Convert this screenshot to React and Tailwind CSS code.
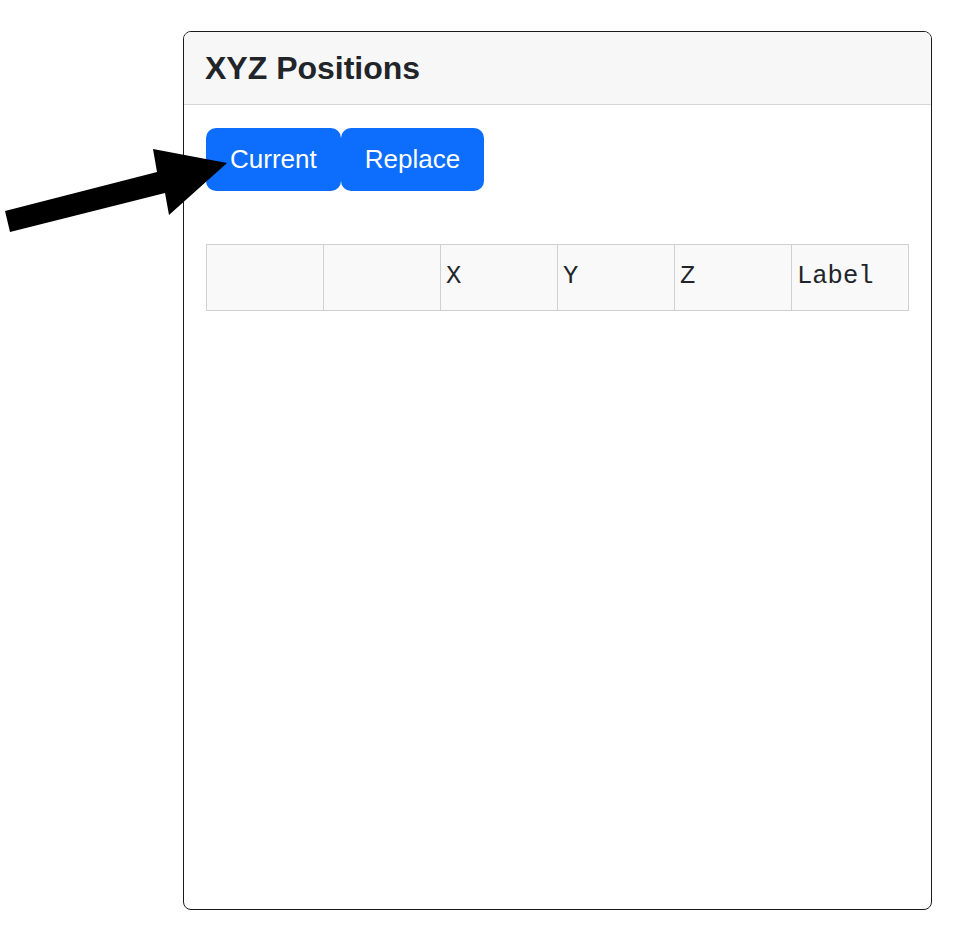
export default function App() {
    const cols = ["", "", "X", "Y", "Z", "Label"];

    return (
        <div className="relative min-h-[939px] bg-white pl-[183px] pt-[31px] font-['Liberation_Sans',Arial,sans-serif]">
            <div className="flex h-[879px] w-[749px] flex-col overflow-hidden rounded-[8px] border-[1.5px] border-[#1a1a1a]">
                <div className="flex h-[73px] items-center border-b border-[#d6d6d6] bg-[#f7f7f7] px-[21px]">
                    <h2 className="text-[32px] font-bold text-[#212529]">XYZ Positions</h2>
                </div>
                <div className="flex flex-col pl-[22px] pt-[23px]">
                    <div className="flex">
                        <button className="h-[63px] rounded-[10px] bg-[#0d6efd] px-[24px] text-[26px] text-white">
                            Current
                        </button>
                        <button className="h-[63px] rounded-[10px] bg-[#0d6efd] px-[24px] text-[26px] text-white">
                            Replace
                        </button>
                    </div>
                    <table className="mt-[53px] w-[703px] table-fixed border-collapse bg-[#f9f9f9] font-['Liberation_Mono','Courier_New',monospace]">
                        <thead>
                            <tr className="h-[66px]">
                                {cols.map((c, i) => (
                                    <th
                                        key={i}
                                        className="border border-[#d0d0d0] px-[5px] text-left text-[25.5px] font-normal text-[#212529]"
                                    >
                                        {c}
                                    </th>
                                ))}
                            </tr>
                        </thead>
                    </table>
                </div>
            </div>

            <svg className="absolute left-0 top-0" width="240" height="240" viewBox="0 0 240 240">
                <polygon
                    points="5,211 157,172 153,149 227,163 169,215 165,193 10,232"
                    fill="#000"
                />
            </svg>
        </div>
    );
}
